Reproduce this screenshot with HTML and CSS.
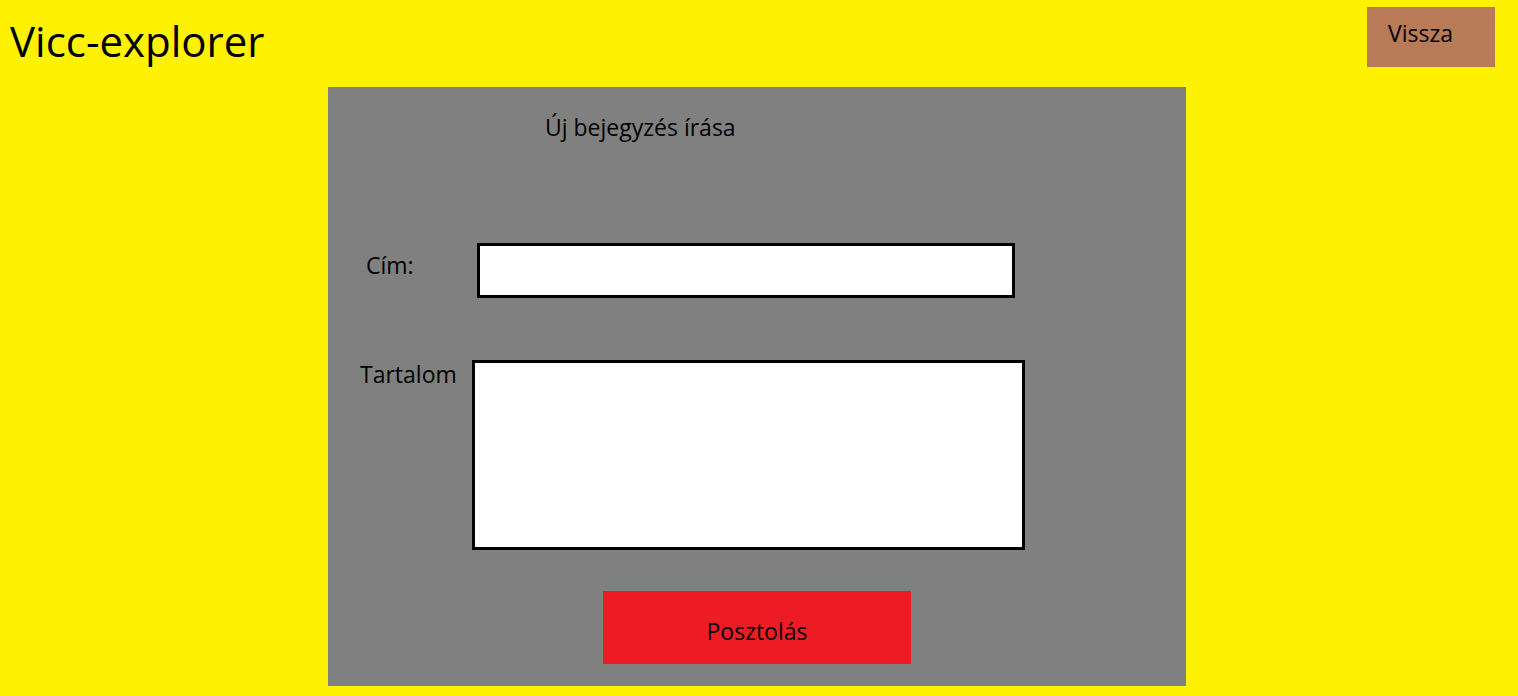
FILE: index.html
```html
<!DOCTYPE html>
<html lang="hu">
<head>
<meta charset="utf-8">
<title>Vicc-explorer</title>
<link rel="stylesheet" href="styles.css">
</head>
<body>
<header class="top">
  <h1 class="brand">Vicc-explorer</h1>
  <button class="back">Vissza</button>
</header>
<main class="panel">
  <h2 class="panel-title">Új bejegyzés írása</h2>
  <div class="row row-title">
    <label class="lbl lbl-cim">Cím:</label>
    <div class="field field-cim"></div>
  </div>
  <div class="row row-content">
    <label class="lbl lbl-tart">Tartalom</label>
    <div class="field field-tart"></div>
  </div>
  <div class="actions">
    <button class="post">Posztolás</button>
  </div>
</main>
</body>
</html>
```
FILE: styles.css
```css
* { box-sizing: border-box; }
html, body { margin: 0; padding: 0; }
body {
  background: #fff200;
  width: 1518px;
  height: 696px;
  overflow: hidden;
  font-family: "Open Sans", "Lato", sans-serif;
  color: #000;
}
.top {
  display: flex;
  justify-content: space-between;
  align-items: flex-start;
  height: 87px;
  padding: 7px 23px 0 10px;
}
.brand {
  margin: 10px 0 0 0;
  font-weight: normal;
  font-size: 42px;
  line-height: 48px;
}
.back {
  width: 128px;
  height: 60px;
  background: #b97a57;
  border: none;
  font-family: inherit;
  font-size: 23px;
  line-height: 30px;
  text-align: left;
  padding: 0 0 8px 21px;
  color: #000;
}
.panel {
  margin-left: 328px;
  width: 858px;
  height: 599px;
  background: #808080;
  padding-top: 25px;
}
.panel-title {
  margin: 0 0 0 217px;
  font-weight: normal;
  font-size: 23px;
  line-height: 30px;
}
.row {
  display: flex;
  align-items: flex-start;
}
.row-title { margin-top: 101px; }
.row-content { margin-top: 62px; }
.lbl { font-size: 23px; line-height: 30px; }
.lbl-cim { margin: 7px 0 0 38px; width: 111px; }
.lbl-tart { margin: -1px 0 0 32px; width: 112px; }
.field {
  background: #fff;
  border: 3px solid #000;
}
.field-cim { width: 538px; height: 55px; }
.field-tart { width: 553px; height: 190px; }
.actions {
  margin-top: 41px;
  padding-left: 275px;
}
.post {
  width: 308px;
  height: 73px;
  background: #ed1c24;
  border: none;
  font-family: inherit;
  font-size: 23px;
  line-height: 30px;
  padding-top: 8px;
  color: #000;
}
```
